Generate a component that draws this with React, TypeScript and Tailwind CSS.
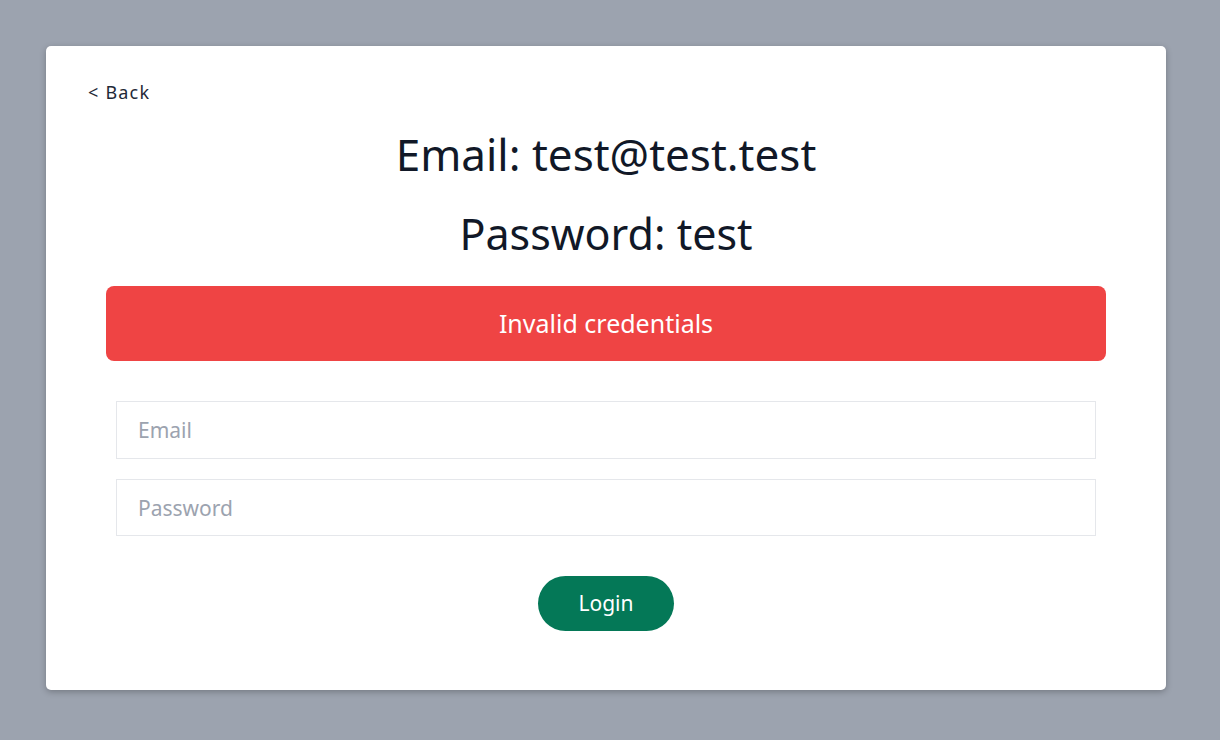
import React from "react";

export default function App() {
  const font = { fontFamily: '"Noto Sans", "Open Sans", sans-serif' };
  return (
    <div className="min-h-[740px] w-full bg-[#9ca3af] pt-[46px] pl-[46px]" style={font}>
      <div className="flex h-[644px] w-[1120px] flex-col rounded-[5px] bg-white shadow-[0_2px_6px_rgba(0,0,0,0.25)]">
        <div className="pl-[42px] pt-[34px]">
          <a className="text-[18px] leading-[24px] tracking-[1.2px] text-[#1f2937]">&lt; Back</a>
        </div>
        <h1 className="mt-[27px] text-center text-[44px] leading-[44px] text-[#111827]">Email: test@test.test</h1>
        <h1 className="mt-[36px] text-center text-[43px] leading-[44px] text-[#111827]">Password: test</h1>
        <div className="mx-[60px] mt-[30px] flex h-[75px] items-center justify-center rounded-[8px] bg-[#ef4444] text-[25px] text-white">
          Invalid credentials
        </div>
        <div className="mx-[70px] mt-[40px] flex flex-col gap-[20px]">
          <input
            placeholder="Email"
            className="h-[58px] w-full border border-[#e5e7eb] px-[21px] text-[21px] text-[#111827] outline-none placeholder:text-[#9ca3af]"
            style={font}
          />
          <input
            placeholder="Password"
            type="password"
            className="h-[57px] w-full border border-[#e5e7eb] px-[21px] text-[21px] text-[#111827] outline-none placeholder:text-[#9ca3af]"
            style={font}
          />
        </div>
        <div className="mt-[40px] flex justify-center">
          <button className="h-[55px] w-[136px] rounded-full bg-[#047857] text-[21px] text-white" style={font}>
            Login
          </button>
        </div>
      </div>
    </div>
  );
}
